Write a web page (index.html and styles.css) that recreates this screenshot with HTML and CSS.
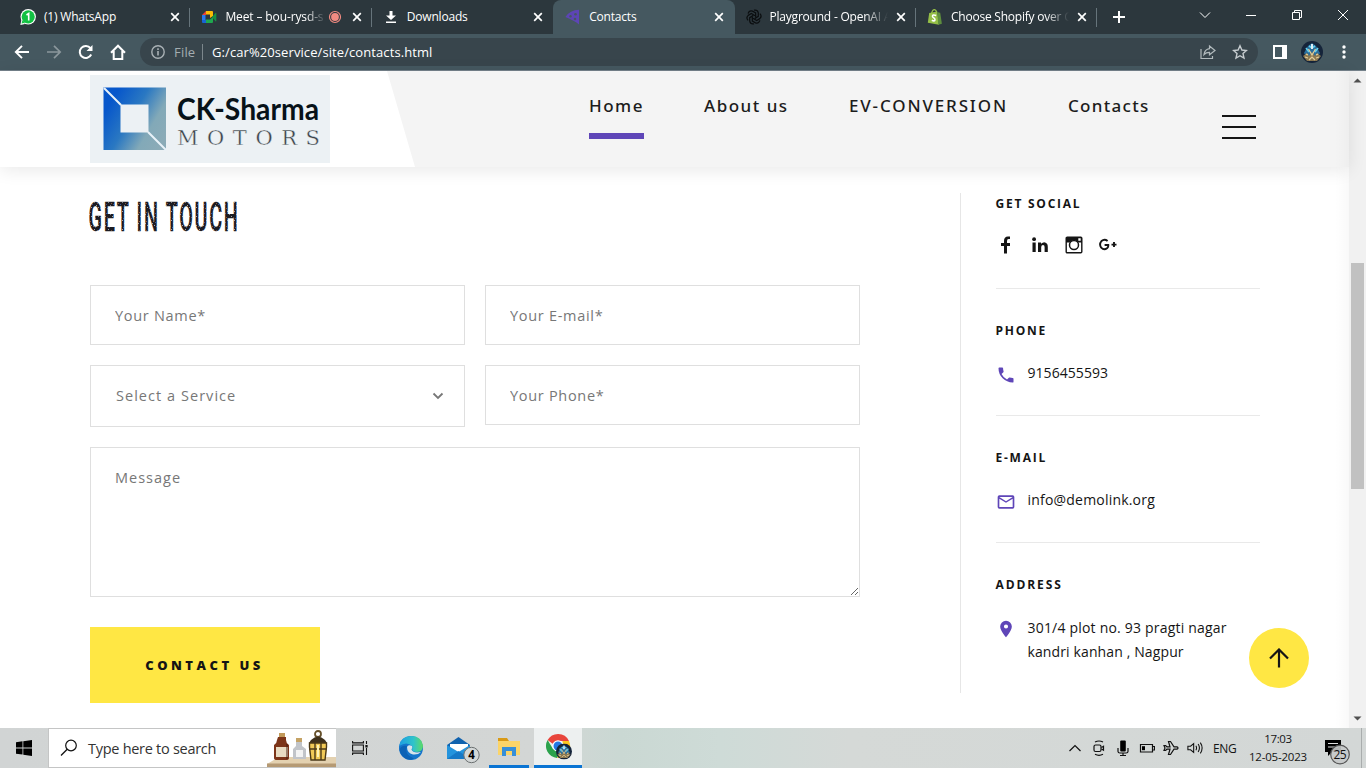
FILE: index.html
```html
<!DOCTYPE html>
<html lang="en">
<head>
<meta charset="utf-8">
<title>Contacts</title>
<link rel="stylesheet" href="styles.css">
</head>
<body>
<svg width="0" height="0" class="defs">
  <defs>
    <symbol id="x" viewBox="0 0 10 10"><path d="M1.2 1.2 8.8 8.8M8.8 1.2 1.2 8.8" stroke="#fff" stroke-width="1.7"/></symbol>
    <linearGradient id="logoBlue" x1="0" y1="0.2" x2="1" y2="0.8"><stop offset=".1" stop-color="#0757cb"/><stop offset=".45" stop-color="#2a78c2"/><stop offset=".75" stop-color="#82a9b8"/><stop offset="1" stop-color="#8babb7"/></linearGradient>
    <pattern id="speckle" width="7" height="9" patternUnits="userSpaceOnUse">
      <rect width="7" height="9" fill="#1c1c22"/>
      <path d="M1 1h1v1h-1zM4 5h1v1h-1zM6 8h1v1h-1z" fill="#a5a7b0"/>
      <path d="M3 2h1v1h-1zM0 6h1v1h-1z" fill="#8c5a3c"/>
      <path d="M5 3h1v1h-1zM2 7h1v1h-1z" fill="#3c5595"/>
    </pattern>
    <symbol id="avatar" viewBox="0 0 22 22">
      <circle cx="11" cy="11" r="11" fill="#15243a"/>
      <path d="M3 12l4-7 4-3 4 3 4 7-3 5H6z" fill="#2b6d9b"/>
      <path d="M5 7l3 4M17 7l-3 4M8 5l3 2 3-2" stroke="#5fd0f0" stroke-width="1.6" fill="none"/>
      <path d="M2 15l4-3 2 3 3-4 3 4 2-3 4 3-4 5H6z" fill="#8c7850"/>
      <path d="M7.500 8l3.500 6 3.500-6M4 16l3 1M18 16l-3 1M8 19l3-3 3 3M5 13l2 1M17 13l-2 1" stroke="#e3cd98" stroke-width="1.200" fill="none"/>
      <path d="M10 3h2v5h-2z" fill="#dceef5"/>
    </symbol>
  </defs>
</svg>

<div class="tabstrip">
  <div class="tab">
    <svg class="fav" viewBox="0 0 16 16"><circle cx="8.2" cy="7.8" r="7.7" fill="#fff"/><path d="M.3 16l1.2-5 3.5 4z" fill="#fff"/><circle cx="8.2" cy="7.8" r="6.6" fill="#12c143"/><path d="M1.5 14.6l1-3.6 2.6 2.7z" fill="#12c143"/><path d="M6.5 6L8.7 4.500V11.500" stroke="#fff" stroke-width="1.6" fill="none"/></svg>
    <span class="title t1">(1) WhatsApp</span><svg class="close"><use href="#x"/></svg>
  </div>
  <div class="tab">
    <svg class="fav" viewBox="0 0 16 16"><path d="M1 6l4-4v4z" fill="#ea4335"/><path d="M1 6h3.500v5H1z" fill="#2878f0"/><path d="M1 11h4v3H2q-1 0-1-1z" fill="#1863d5"/><path d="M5 2h6q1 0 1 1v4L9 9V5.500H5z" fill="#fbbc05"/><path d="M5 10.500h4L12 8v5q0 1-1 1H5z" fill="#1fa84f"/><path d="M11 8l3.500-4q.8-.5.8.4v7.500q0 .8-.8.3z" fill="#188f43"/></svg>
    <span class="title fade t2">Meet – bou-rysd-s</span>
    <svg class="rec" viewBox="0 0 14 14"><circle cx="7" cy="7" r="5.500" fill="none" stroke="#f28b82" stroke-width="1.2"/><circle cx="7" cy="7" r="3.900" fill="#f28b82"/></svg>
    <svg class="close"><use href="#x"/></svg>
  </div>
  <div class="tab">
    <svg class="fav" viewBox="0 0 16 16"><path d="M6.500 2h3v4.500H13L8 11 3 6.500h3.500zM3 12.500h10v1.600H3z" fill="#fff"/></svg>
    <span class="title t3">Downloads</span><svg class="close"><use href="#x"/></svg>
  </div>
  <div class="tab active">
    <svg class="fav" viewBox="0 0 16 16"><path d="M.4 8Q5 1 14 .8V15.600Q10.500 12 .4 8z" fill="#5d45b5"/><g fill="#455860"><circle cx="10.500" cy="5.200" r="1.300"/><circle cx="5.500" cy="7.300" r="1.200"/><circle cx="10" cy="10" r="1.300"/></g></svg>
    <span class="title t4">Contacts</span><svg class="close"><use href="#x"/></svg>
  </div>
  <div class="tab">
    <svg class="fav" viewBox="0 0 16 16" fill="none" stroke="#0b0e10" stroke-width="1.25"><g id="p"><path d="M8 1.200q3.500-.8 4.300 2.600v3.600L8.600 9.600"/></g><use href="#p" transform="rotate(60 8 8)"/><use href="#p" transform="rotate(120 8 8)"/><use href="#p" transform="rotate(180 8 8)"/><use href="#p" transform="rotate(240 8 8)"/><use href="#p" transform="rotate(300 8 8)"/></svg>
    <span class="title fade t5">Playground - OpenAI A</span><svg class="close"><use href="#x"/></svg>
  </div>
  <div class="tab">
    <svg class="fav" viewBox="0 0 16 16"><path d="M2.200 4l8-1.600L12 15.800.8 13.800z" fill="#95bf47"/><path d="M10.200 2.400l1.500 1.100 1.500.3 1.700 11-3.600 1z" fill="#5e8e3e"/><path d="M4.500 4.500Q5.500.500 7.500.700 9.500 1 9.500 4" fill="none" stroke="#95bf47" stroke-width="1.200"/><path d="M9.200 6.500Q5.300 5 5.500 7.500C5.700 9 8.200 9 8 10.800Q7.600 12.700 4.800 11.300" stroke="#fff" stroke-width="1.600" fill="none"/></svg>
    <span class="title fade t6">Choose Shopify over G</span><svg class="close"><use href="#x"/></svg>
  </div>
  <svg class="plus" viewBox="0 0 14 14"><path d="M7 1v12M1 7h12" stroke="#fff" stroke-width="2"/></svg>
  <div class="winbtns">
    <svg viewBox="0 0 12 12"><path d="M1 3.500l5 5 5-5"/></svg>
    <svg viewBox="0 0 12 12"><path d="M1 6.500h10"/></svg>
    <svg viewBox="0 0 12 12"><path d="M1.500 3.500h7v7h-7zM3.500 3.500v-2h7v7h-2"/></svg>
    <svg viewBox="0 0 12 12"><path d="M1 1l10 10M11 1L1 11"/></svg>
  </div>
</div>

<div class="toolbar">
  <svg class="tb" viewBox="0 0 16 16"><path d="M15 8H2M8 1.800L1.800 8 8 14.200" stroke="#fff" stroke-width="1.900" fill="none"/></svg>
  <svg class="tb" viewBox="0 0 16 16"><path d="M1 8h13M8 1.800L14.200 8 8 14.200" stroke="#8b979c" stroke-width="1.700" fill="none"/></svg>
  <svg class="tb" viewBox="0 0 16 16"><path d="M13.200 10.500A6 6 0 1 1 12.500 4.200" stroke="#fff" stroke-width="2" fill="none"/><path d="M14.500 1v6h-6z" fill="#fff"/></svg>
  <svg class="tb" viewBox="0 0 16 16"><path d="M1 8.800L8 1.700l7 7.100M3.700 7v8h8.600V7" stroke="#fff" stroke-width="2" fill="none"/></svg>
  <div class="omnibox">
    <svg class="info" viewBox="0 0 14 14"><circle cx="7" cy="7" r="6.200" fill="none" stroke="#a9b1b5" stroke-width="1.400"/><path d="M7 6v4.500M7 3.300v1.600" stroke="#a9b1b5" stroke-width="1.600"/></svg>
    <span class="file">File</span><span class="sep"></span><span class="url">G:/car%20service/site/contacts.html</span>
    <svg class="share" viewBox="0 0 16 16" fill="none" stroke="#b2babd" stroke-width="1.200"><path d="M1 5v9.500h11.500V12M9.500 2l5.500 4.500-5.500 4.300V8.300Q6 8.300 4 10.500 4.800 5.300 9.500 4.700z"/></svg>
    <svg class="star" viewBox="0 0 16 16" fill="none" stroke="#c6cccf" stroke-width="1.400"><path d="M8 1.800l1.900 4.200 4.500.5-3.400 3.100 1 4.500L8 11.700l-4 2.400 1-4.500L1.600 6.500 6.100 6z"/></svg>
  </div>
  <svg class="panel" viewBox="0 0 14 14"><path d="M1 1h12v12H1z" fill="none" stroke="#fff" stroke-width="2"/><path d="M9 1h4v12H9z" fill="#fff"/></svg>
  <svg class="me"><use href="#avatar"/></svg>
  <svg class="dots" viewBox="0 0 4 14" fill="#fff"><circle cx="2" cy="2" r="1.700"/><circle cx="2" cy="7" r="1.700"/><circle cx="2" cy="12" r="1.700"/></svg>
</div>

<div class="viewport">
  <div class="page">
    <header class="header">
      <div class="brand">
        <svg class="logo" viewBox="0 0 240 88">
          <rect width="240" height="88" fill="#ecf1f4"/>
          <path fill-rule="evenodd" d="M13.500 12.500h62.500V75h-62.500zM30.500 29.500v28h28v-28z" fill="url(#logoBlue)"/>
          <path d="M14 13l17 17M58 57l18 18" stroke="#e8f2f8" stroke-width="2"/>
          <text x="87" y="45" class="ck" textLength="142" lengthAdjust="spacingAndGlyphs">CK-Sharma</text>
          <text x="87" y="70" class="motors" textLength="143">MOTORS</text>
        </svg>
      </div>
      <nav class="nav">
        <a class="n1 current">Home</a><a class="n2">About us</a><a class="n3">EV-CONVERSION</a><a class="n4">Contacts</a>
      </nav>
      <div class="burger"><i></i><i></i><i></i></div>
    </header>
    <main class="main">
      <section class="contact">
        <svg class="heading" viewBox="0 0 160 40"><text x="-1.500" y="34" textLength="151" lengthAdjust="spacingAndGlyphs" fill="url(#speckle)">GET IN TOUCH</text></svg>
        <form class="form">
          <input placeholder="Your Name*">
          <input placeholder="Your E-mail*">
          <div class="select">Select a Service<svg viewBox="0 0 12 8"><path d="M1.500 1.500L6 6l4.500-4.500" fill="none" stroke="#777" stroke-width="1.800"/></svg></div>
          <input placeholder="Your Phone*">
          <textarea placeholder="Message"></textarea>
          <button type="button">CONTACT US</button>
        </form>
      </section>
      <aside class="side">
        <div class="block"><h4 class="s1">GET SOCIAL</h4>
          <div class="social">
            <svg viewBox="0 0 20 20"><path d="M8 18.500V11H5V8h3V6q0-4.500 4-4.500h2V4h-1.500Q11 4 11 6v2h3v3h-3v7.500z"/></svg>
            <svg viewBox="0 0 20 20"><path d="M2.500 7.500h3.200V17H2.500zM8 7.500h3v1.300q3.500-3 6 0 .8 1 .8 3.200v5h-3.200v-5q0-2-1.600-2t-1.800 2v5H8z"/><circle cx="4.100" cy="4.200" r="1.900"/></svg>
            <svg viewBox="0 0 20 20"><rect x="2.200" y="2.200" width="15.600" height="15.600" rx="1" fill="none" stroke="#151515" stroke-width="1.400"/><path d="M2 2h16v5.500h-4Q10 3 6 7.500H2z"/><circle cx="10" cy="10" r="4.500" fill="#fff" stroke="#151515" stroke-width="1.500"/><path d="M14.300 3.300h2.400v2.400h-2.400z" fill="#fff"/></svg>
            <svg viewBox="0 0 20 20"><path d="M9.600 6Q6.500 3.500 3.500 6 .8 9.300 3.200 12.700 6 15.500 9 13.300 10.500 12 10.300 10H6.600M13.500 9.600h5M16 7.100v5" fill="none" stroke="#151515" stroke-width="1.900"/></svg>
          </div></div>
        <div class="block"><h4 class="s2">PHONE</h4>
          <div class="row"><svg viewBox="0 0 24 24"><path d="M6.620 10.790a15.150 15.150 0 0 0 6.590 6.590l2.200-2.200a1 1 0 0 1 1.010-.24 11.400 11.400 0 0 0 3.580.57 1 1 0 0 1 1 1V20a1 1 0 0 1-1 1A17 17 0 0 1 3 4a1 1 0 0 1 1-1h3.500a1 1 0 0 1 1 1c0 1.250.2 2.450.57 3.570a1 1 0 0 1-.24 1.020z"/></svg><p class="r1">9156455593</p></div></div>
        <div class="block"><h4 class="s3">E-MAIL</h4>
          <div class="row"><svg viewBox="0 0 24 24"><path d="M20 4H4a2 2 0 0 0-2 2v12a2 2 0 0 0 2 2h16a2 2 0 0 0 2-2V6a2 2 0 0 0-2-2zm0 14H4V8l8 5 8-5zM12 11L4 6h16z"/></svg><p class="r2">info@demolink.org</p></div></div>
        <div class="block"><h4 class="s4">ADDRESS</h4>
          <div class="row"><svg viewBox="0 0 24 24"><path d="M12 2a7 7 0 0 0-7 7c0 5.250 7 13 7 13s7-7.750 7-13a7 7 0 0 0-7-7zm0 9.500a2.500 2.500 0 1 1 0-5 2.500 2.500 0 0 1 0 5z"/></svg><p><span class="r3">301/4 plot no. 93 pragti nagar</span><br><span class="r4">kandri kanhan , Nagpur</span></p></div></div>
      </aside>
    </main>
    <div class="totop"><svg viewBox="0 0 20 20"><path d="M10 19.500V2M1 10.500l9-9 9 9" fill="none" stroke="#151515" stroke-width="2.200"/></svg></div>
  </div>
  <div class="scroll">
    <svg viewBox="0 0 8 5"><path d="M0 4.500L4 .500l4 4z" fill="#505050"/></svg>
    <div class="thumb"></div>
    <svg class="down" viewBox="0 0 8 5"><path d="M0 .500h8l-4 4z" fill="#505050"/></svg>
  </div>
</div>

<div class="taskbar">
  <div class="start"><svg viewBox="0 0 16 16"><path d="M0 2.200l6.500-.9v6.200H0zM7.300 1.200L16 0v7.500H7.300zM0 8.400h6.500v6.200L0 13.700zM7.300 8.400H16V16l-8.700-1.200z"/></svg></div>
  <div class="search">
    <svg class="mag" viewBox="0 0 18 18"><circle cx="11" cy="6.500" r="5.300" fill="none" stroke="#111" stroke-width="1.200"/><path d="M7.200 10.300L1 16.500" stroke="#111" stroke-width="1.300"/></svg>
    <span class="hint">Type here to search</span>
    <svg class="art" viewBox="0 0 69 38">
      <path d="M12 28h57v7H0z" fill="#e3d1b0"/><path d="M0 34.500h69V38H0z" fill="#b59a74"/>
      <path d="M12 4h6v5h-6z" fill="#c29a5b"/><path d="M11 8h8v3q0 3 3 5v13q0 2-3 2h-9q-3 0-3-2V16q3-2 3-5z" fill="#7d3519"/><path d="M9 18h12v10H9z" fill="#e9dcc2"/><path d="M20 15v15" stroke="#4b1d0e"/>
      <path d="M29 9h6v4h-6z" fill="#c5a365"/><path d="M29 13h6v4l4 3v10H26V20l3-3z" fill="#c1c4c9"/><path d="M29 21h7v7h-7z" fill="#f3f3f3"/>
      <circle cx="51" cy="5" r="3" fill="none" stroke="#66502b" stroke-width="1.800"/><path d="M44 11q7-7 14 0l2 3H42z" fill="#3e301c"/><path d="M42 14h18v3l-1.500 14h-15L42 17z" fill="#f1c957"/><path d="M42.500 14h17v4L58 31H44l-1.500-13zM48 14v17M54 14v17M42 20h18" fill="none" stroke="#4b3918" stroke-width="1.400"/><path d="M51 16v12" stroke="#fff3b5" stroke-width="2"/>
    </svg>
  </div>
  <div class="app"><svg class="i16" viewBox="0 0 17 16" fill="none" stroke="#111" stroke-width="1.100"><path d="M.6 1v1.900h10.800V1M.6 5h10.800v6H.6zM.6 15v-1.900h10.800V15M14.500 1v3M14.500 8v7"/><path d="M14.500 5v2.500" stroke-width="2.300"/></svg></div>
  <div class="app edge"><svg class="i24" viewBox="0 0 24 24"><defs><linearGradient id="e1" x1="0" x2="1"><stop offset="0" stop-color="#1d9de2"/><stop offset=".6" stop-color="#2fc3ca"/><stop offset="1" stop-color="#5edb64"/></linearGradient></defs><circle cx="12" cy="12" r="12" fill="#1475cb"/><path d="M.2 10Q2 0 12 0q10.500 0 12 9.500 0 6-6 6.500-5 0-5-3 1.500-2 0-3Q8 5 .2 10z" fill="url(#e1)"/><path d="M8 11q1-3 5-1 1 1-.5 3.500Q14 17.500 22 16q-3 3-8 2.500Q8 17 8 11z" fill="#d7e4ea"/><path d="M8 10q-3 9 7 12.500-3 2-7 .8Q2 21 .5 14 2 9 8 10z" fill="#0c62b5"/></svg></div>
  <div class="app mail"><svg class="mailico" viewBox="0 0 34 28"><path d="M1 9L12.500 1 24 9v4H1z" fill="#1062ae"/><path d="M4 8h18v9H4z" fill="#fff"/><path d="M1 9l11.500 7L24 9v14H1z" fill="#2494dd"/><path d="M1 23l11.500-8L24 23z" fill="#1679c7"/><circle cx="25.500" cy="19" r="7.700" fill="#d3d7d7" stroke="#6b7071"/><text x="22.300" y="23.300" class="badge">4</text></svg></div>
  <div class="app folder"><svg class="i22" viewBox="0 0 22 20"><path d="M0 1h9l2 3H0z" fill="#d99a16"/><path d="M0 4h22v14H0z" fill="#fbd468"/><path d="M4 10h14v9h-4v-5H8v5H4z" fill="#378fd8"/></svg></div>
  <div class="app chrome"><svg class="chromeico" viewBox="0 0 28 26"><path d="M12 0a12 12 0 0 1 11 7H12a5.500 5.500 0 0 0-5 3L1.600 6A12 12 0 0 1 12 0z" fill="#e8453c"/><path d="M1.600 6A12 12 0 0 0 11 24l5-8-9-1z" fill="#2ba24c"/><path d="M23 7a12 12 0 0 1-12 17l5.500-9.500V7z" fill="#fcc71f"/><circle cx="12" cy="12" r="5.700" fill="#fff"/><circle cx="12" cy="12" r="4.500" fill="#2478e5"/><use href="#avatar" x="10" y="9.500" width="16" height="16"/></svg></div>
  <div class="tray">
    <svg viewBox="0 0 16 16"><path d="M2.500 11L8 5.500l5.500 5.500"/></svg>
    <svg viewBox="0 0 16 16"><rect x="3" y="5" width="7" height="6.500" rx="1.500"/><path d="M10.500 7.500l2-1.200v4l-2-1.200M4 2q4-2 8 0M4 14.300q4 2 8 0"/></svg>
    <svg viewBox="0 0 16 16"><rect x="5.200" y=".5" width="5.600" height="11" rx="1" fill="#000" stroke="none"/><path d="M3 8v3.500q0 1.500 2 1.500h6q2 0 2-1.500V8M8 13v2.500M5 15.500h6"/></svg>
    <svg viewBox="0 0 16 16"><path d="M1.500 4.500h12v7.500h-12zM14 6.500h1.500V10H14"/><path d="M3 6.200h3v4H3z" fill="#000" stroke="none"/></svg>
    <svg viewBox="0 0 16 16"><path d="M1 5.500h1.500l1.500 1.300h3L5.500 1.500h2L11 6.800h3q2 1.200 0 2.400h-3L7.500 14.500h-2L7 9.200H4L2.500 10.500H1L2 8z"/></svg>
    <svg viewBox="0 0 18 16"><path d="M1 6h3l3.500-3v10L4 10H1zM10 5.500q1.500 2.500 0 5M12.500 3.500q3 4.500 0 9M15 2q4 6 0 12"/></svg>
    <span class="eng">ENG</span>
    <div class="clock"><span class="time">17:03</span><span class="date">12-05-2023</span></div>
    <svg class="notif" viewBox="0 0 28 26"><path d="M1 1h16v12H8l-4 4v-4H1z" fill="#000" stroke="none"/><path d="M4 4.500h10M4 8h10" stroke="#ddd"/><circle cx="16" cy="15.500" r="9.300" fill="#c5c9c9" fill-opacity=".9" stroke="#555"/><text x="9.500" y="20" class="badge25">25</text></svg>
    <i class="peek"></i>
  </div>
</div>
</body>
</html>
```
FILE: styles.css
```css
* { box-sizing: border-box; }
body { margin: 0; width: 1366px; height: 768px; overflow: hidden; display: flex; flex-direction: column; font-family: "Open Sans", "Noto Sans", sans-serif; color: #151515; background: #fff; }
svg { display: block; flex: none; }
.defs { position: absolute; }

.tabstrip { height: 34px; flex: none; background: #2c373d; display: flex; align-items: center; padding-left: 9px; }
.tab { width: 181.4px; height: 34px; flex: none; display: flex; align-items: center; padding: 0 10px 0 11px; position: relative; }
.tab:not(.active)::after { content: ""; position: absolute; right: 0; top: 8px; height: 19px; width: 1px; background: #66747b; }
.tab:nth-child(3)::after { display: none; }
.tab.active { background: #455860; border-radius: 8px 8px 0 0; padding: 0 11px 0 12px; }
.tab.active .fav { margin-right: 8px; }
.fav { width: 16px; height: 16px; margin-right: 8px; }
.title { flex: 1; white-space: nowrap; overflow: hidden; font-size: 12px; color: #fff; line-height: 18px; letter-spacing: -.2px; }
.t2 { letter-spacing: -.12px; }
.t5, .t6 { letter-spacing: -.22px; flex: 0 0 118px; margin-right: auto; }
.fade { -webkit-mask-image: linear-gradient(90deg, #000 80%, transparent); mask-image: linear-gradient(90deg, #000 80%, transparent); }
.rec { width: 14px; height: 14px; margin: 0 10px 0 2px; }
.close { width: 10px; height: 10px; }
.plus { width: 14px; height: 14px; margin-left: 15px; }
.winbtns { margin-left: auto; display: flex; gap: 34px; padding: 0 17px 5px 0; }
.winbtns svg { width: 12px; height: 12px; fill: none; stroke: #fff; stroke-width: 1; }

.toolbar { height: 37px; flex: none; background: #455860; border-bottom: 1px solid #74818a; display: flex; align-items: center; padding: 0 20px 0 14px; }
.tb { width: 16px; height: 16px; margin-right: 16px; }
.omnibox { margin-left: -2px; width: 1118px; height: 28px; border-radius: 14px; background: #38454c; display: flex; align-items: center; padding: 0 10px 0 11px; font-size: 13px; }
.info { width: 14px; height: 14px; margin-right: 9px; }
.file { color: #a4adb1; width: 28px; letter-spacing: .2px; }
.sep { width: 1px; height: 16px; background: #7c878c; margin-right: 9px; }
.url { color: #fff; letter-spacing: .09px; }
.share { width: 16px; height: 16px; margin-left: auto; margin-right: 16px; }
.star { width: 16px; height: 16px; }
.panel { width: 14px; height: 14px; margin-left: 15px; }
.me { width: 22px; height: 22px; margin-left: 14px; }
.dots { width: 4px; height: 14px; margin-left: auto; }

.viewport { flex: 1; min-height: 0; display: flex; }
.page { width: 1349px; position: relative; }
.page::after { content: ""; position: absolute; top: 0; bottom: 0; right: 0; width: 14px; background: linear-gradient(90deg, rgba(0,0,0,0), rgba(0,0,0,.025)); }
.header { height: 96px; background: #f4f4f4; box-shadow: 0 3px 17px rgba(0,0,0,.09); display: flex; position: relative; }
.brand { width: 415px; height: 96px; background: #fff; clip-path: polygon(0 0, 387px 0, 415px 100%, 0 100%); padding: 4px 0 0 90px; }
.logo { width: 240px; height: 88px; }
.ck { font: 700 30px Lato, sans-serif; fill: #071218; }
.motors { font: 300 21px "DejaVu Serif", serif; fill: #394148; stroke: #ecf1f4; stroke-width: .4px; }
.nav { display: flex; margin-left: 174px; gap: 60px; padding-top: 22px; height: 68px; }
.nav a { font: 500 17px/26px "Noto Sans", sans-serif; letter-spacing: 1.5px; white-space: nowrap; height: 46px; color: #1c1c1c; }
.nav .current { border-bottom: 6px solid #5f46b8; }
.n1 { width: 55px; } .n2 { width: 85px; } .n3 { width: 159px; } .n4 { width: 82px; }
.nav .n3 { letter-spacing: 1.85px; }
.nav .n4 { letter-spacing: 1.3px; }
.burger { margin-left: 72px; margin-top: 44px; width: 34px; height: 24px; display: flex; flex-direction: column; justify-content: space-between; }
.burger i { height: 2px; background: #151515; }

.main { display: flex; padding: 26px 0 0 90px; }
.contact { width: 770px; }
.heading { width: 160px; height: 40px; margin-top: 4px; overflow: visible; }
.heading text { font: 500 41px Roboto, sans-serif; letter-spacing: 3.5px; stroke: #1c1c22; stroke-width: .3px; }
.form { margin-top: 48px; display: grid; grid-template-columns: 375px 375px; gap: 20px; align-items: start; }
.form input, .form textarea, .select { width: 100%; height: 60px; border: 1px solid #dfdfdf; background: #fff; padding: 0 24px; font: 14.5px/24px "Open Sans", sans-serif; letter-spacing: 1px; color: #777; border-radius: 0; display: block; }
.form input { letter-spacing: .7px; }
.form .select { height: 62px; display: flex; align-items: center; justify-content: space-between; padding: 0 20px 0 25px; letter-spacing: 1.04px; }
.select svg { width: 12px; height: 8px; }
.form ::placeholder { color: #777; opacity: 1; }
.form textarea { grid-column: 1 / 3; height: 150px; padding-top: 18px; resize: both; }
.form button { margin-top: 10px; width: 230px; height: 76px; border: 0; background: #ffe744; color: #151515; font: 800 13px "Open Sans", sans-serif; letter-spacing: 3.5px; padding: 0 1px 0 0; }

.side { margin-left: 100px; width: 299px; height: 500px; border-left: 1px solid #e6e6e6; padding-left: 34.5px; }
.block { height: 127px; padding-top: 32px; border-bottom: 1px solid #e9e9e9; width: 264px; }
.block:first-child { height: 96px; padding-top: 1px; }
.block:last-child { border: 0; }
.block h4 { margin: 0; font: 700 12px/20px "Open Sans", sans-serif; letter-spacing: 1.75px; }
.block .s4 { letter-spacing: 1.9px; }
.social { display: flex; gap: 14px; margin-top: 21px; }
.social svg { width: 20px; height: 20px; fill: #151515; }
.row { display: flex; margin-top: 20px; }
.row svg { width: 20px; height: 20px; fill: #5f46b8; margin: 4px 12px 0 0; }
.row p { margin: 0; font-size: 14px; line-height: 24px; white-space: nowrap; letter-spacing: .2px; }
.row .r1 { letter-spacing: .05px; }
.r4 { letter-spacing: .12px; }
.block:last-child .row { margin-top: 21px; }
.block:last-child .row svg { margin-top: 3px; }
.totop { position: absolute; left: 1249px; top: 557px; width: 60px; height: 60px; border-radius: 50%; background: #ffe744; display: flex; align-items: center; justify-content: center; }
.totop svg { width: 20px; height: 20px; }
.scroll { width: 17px; background: #f1f1f1; display: flex; flex-direction: column; align-items: center; padding: 7px 0; }
.scroll svg { width: 9px; height: 5px; }
.scroll .down { margin-top: auto; }
.thumb { width: 13px; height: 226px; background: #c1c1c1; margin-top: 180px; }

.taskbar { height: 40px; flex: none; background: linear-gradient(90deg, #d1d4d4 0, #d3d6d5 540px, #cad8d3 620px, #cedbd7 720px, #d5d9d7 850px, #d3d7d6 1366px); display: flex; }
.start { width: 48px; display: flex; align-items: center; justify-content: center; }
.start svg { width: 16px; height: 16px; }
.search { width: 288px; height: 40px; background: #fff; border: 1px solid #c4c5c5; border-right: 0; display: flex; align-items: center; padding-left: 11px; }
.mag { width: 18px; height: 18px; margin-right: 10px; }
.hint { font-size: 14.5px; letter-spacing: -.28px; color: #333; white-space: nowrap; }
.art { width: 69px; height: 38px; margin-left: auto; }
.app { width: 48px; display: flex; align-items: center; justify-content: center; }
.i16 { width: 17px; height: 16px; }
.edge { width: 54px; }
.mail { width: 51px; }
.i24 { width: 24px; height: 24px; }
.mailico { width: 34px; height: 28px; margin: 4px 2px 0 0; }
.badge { font: 700 11.5px "Open Sans", sans-serif; }
.folder { width: 40px; border-bottom: 3px solid #0a74d3; }
.i22 { width: 22px; height: 20px; }
.chrome { width: 48px; margin-left: 5px; background: #edf0f0; border-bottom: 3px solid #0a74d3; }
.chromeico { width: 28px; height: 26px; margin-left: 3px; }
.tray { margin-left: auto; display: flex; align-items: center; }
.tray > svg { width: 16px; height: 16px; margin-right: 8px; fill: none; stroke: #111; stroke-width: 1.2; }
.eng { font-size: 12px; letter-spacing: -.3px; width: 24px; margin-left: 2px; }
.clock { width: 80px; display: flex; flex-direction: column; align-items: center; font-size: 11.500px; line-height: 18px; margin-left: 1px; letter-spacing: -.2px; }
.time { letter-spacing: -.4px; }
.tray .notif { width: 28px; height: 26px; margin: 8px 9px 0 6px; }
.badge25 { font: 12px "Open Sans", sans-serif; fill: #111; stroke: none; letter-spacing: -.5px; }
.peek { width: 1px; height: 40px; background: #a9adad; margin-right: 4px; }
```
